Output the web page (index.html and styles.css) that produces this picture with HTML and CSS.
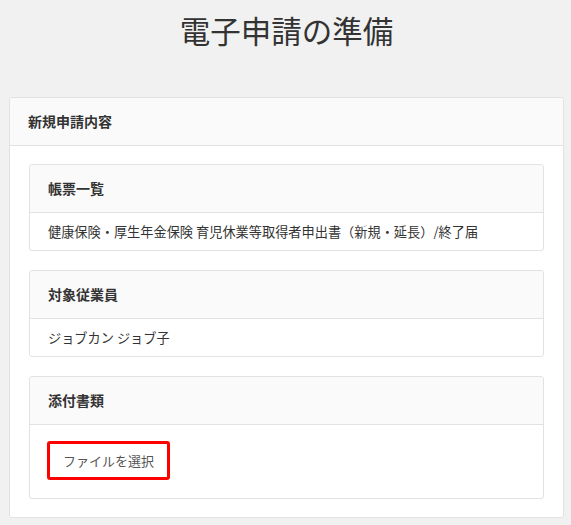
FILE: index.html
```html
<!DOCTYPE html>
<html lang="ja">
<head>
<meta charset="utf-8">
<title>電子申請の準備</title>
<link rel="stylesheet" href="styles.css">
</head>
<body>
<div class="page">
  <h1 class="title">電子申請の準備</h1>
  <section class="panel">
    <div class="panel-head">新規申請内容</div>
    <div class="panel-body">
      <div class="card">
        <div class="card-head">帳票一覧</div>
        <div class="card-body">健康保険・厚生年金保険 育児休業等取得者申出書（新規・延長）/終了届</div>
      </div>
      <div class="card">
        <div class="card-head">対象従業員</div>
        <div class="card-body">ジョブカン ジョブ子</div>
      </div>
      <div class="card">
        <div class="card-head">添付書類</div>
        <div class="card-body card-body-file">
          <button class="file-btn" type="button">ファイルを選択</button>
        </div>
      </div>
    </div>
  </section>
</div>
</body>
</html>
```

FILE: styles.css
```css
html, body {
  margin: 0;
  padding: 0;
  background: #f1f1f1;
}
body {
  font-family: "Noto Sans CJK JP", "Noto Sans", "Liberation Sans", sans-serif;
  color: #333;
}
.page {
  padding: 0 7px 0 9px;
}
.title {
  margin: 12px 0 0;
  font-size: 30.5px;
  line-height: 36px;
  font-weight: 400;
  text-align: center;
  color: #333;
}
.panel {
  margin-top: 49px;
  background: #fff;
  border: 1px solid #e2e2e2;
  border-radius: 3px;
}
.panel-head {
  background: #fafafa;
  border-bottom: 1px solid #e2e2e2;
  padding: 15px 18px;
  font-size: 14px;
  line-height: 17px;
  font-weight: 700;
  border-radius: 3px 3px 0 0;
}
.panel-body {
  padding: 18px 19px;
}
.card {
  border: 1px solid #e2e2e2;
  border-radius: 3px;
  background: #fff;
  margin-bottom: 19px;
}
.card:last-child {
  margin-bottom: 0;
}
.card-head {
  background: #fafafa;
  border-bottom: 1px solid #e2e2e2;
  padding: 15px 18px;
  font-size: 14px;
  line-height: 17px;
  font-weight: 700;
  border-radius: 3px 3px 0 0;
}
.card-body {
  padding: 9px 18px;
  font-size: 13.2px;
  line-height: 19px;
}
.card-body-file {
  padding: 16px 17px 18px;
}
.file-btn {
  display: block;
  font-family: inherit;
  font-size: 13px;
  line-height: 17px;
  color: #555;
  background: #fff;
  border: 3px solid #f00;
  border-radius: 3px;
  padding: 8px 13px;
  margin: 0;
}
```
